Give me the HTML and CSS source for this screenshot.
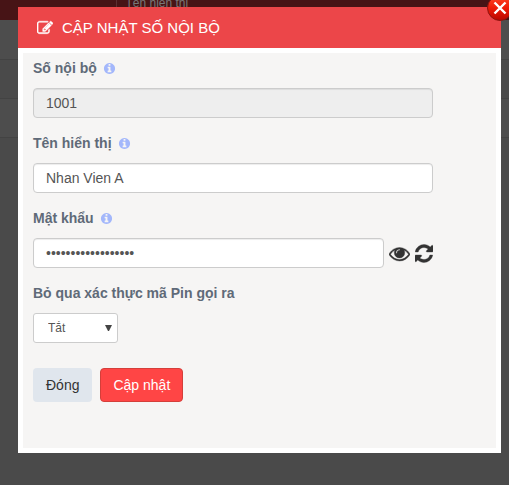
FILE: index.html
```html
<!DOCTYPE html>
<html lang="vi">

<head>
    <meta charset="UTF-8">
    <meta name="viewport" content="width=device-width, initial-scale=1.0">
    <title>Cập nhật số nội bộ</title>
    <link rel="stylesheet" href="styles.css">
</head>

<body>

    <table class="extensions">
        <thead>
            <tr>
                <th class="col-number"></th>
                <th>Tên hiển thị</th>
            </tr>
        </thead>
        <tbody>
            <tr><td></td><td></td></tr>
            <tr><td></td><td></td></tr>
            <tr><td></td><td></td></tr>
        </tbody>
    </table>

    <div class="overlay">
        <div class="modal" role="dialog" aria-labelledby="modalTitle">
            <button type="button" class="close" aria-label="Đóng">
                <svg viewBox="0 0 26 26">
                    <defs>
                        <linearGradient id="closeFill" x1="0" y1="0" x2="0" y2="1">
                            <stop offset="0" stop-color="#ff4a2a"/>
                            <stop offset="0.5" stop-color="#ee1c08"/>
                            <stop offset="1" stop-color="#b80800"/>
                        </linearGradient>
                    </defs>
                    <circle cx="13" cy="13" r="12.500" fill="url(#closeFill)" stroke="#8c1410"/>
                    <path d="M7.500 7.500l11 11M18.500 7.500l-11 11" stroke="#fff" stroke-width="2.400"/>
                </svg>
            </button>

            <h4 class="modal-header" id="modalTitle">
                <svg class="icon-edit" viewBox="0 0 1792 1792"><path d="M888 1184l116-116-152-152-116 116v56h96v96h56zm440-720q-16-16-33 1l-350 350q-17 17-1 33t33-1l350-350q17-17 1-33zm80 594v190q0 119-84.500 203.500t-203.500 84.500h-832q-119 0-203.500-84.500t-84.500-203.500v-832q0-119 84.500-203.500t203.500-84.500h832q63 0 117 25 15 7 18 23 3 17-9 29l-49 49q-14 14-32 8-23-6-45-6h-832q-66 0-113 47t-47 113v832q0 66 47 113t113 47h832q66 0 113-47t47-113v-126q0-13 9-22l64-64q15-15 35-7t20 29zm-96-738l288 288-672 672h-288v-288zm444 132l-92 92-288-288 92-92q28-28 68-28t68 28l152 152q28 28 28 68t-28 68z"/></svg>
                CẬP NHẬT SỐ NỘI BỘ
            </h4>

            <form class="modal-body">
                <svg class="sprite" aria-hidden="true">
                    <symbol id="info" viewBox="0 0 1792 1792"><path d="M1152 1376v-160q0-14-9-23t-23-9h-96v-512q0-14-9-23t-23-9h-320q-14 0-23 9t-9 23v160q0 14 9 23t23 9h96v320h-96q-14 0-23 9t-9 23v160q0 14 9 23t23 9h448q14 0 23-9t9-23zm-128-896v-160q0-14-9-23t-23-9h-192q-14 0-23 9t-9 23v160q0 14 9 23t23 9h192q14 0 23-9t9-23zm640 416q0 209-103 385.500t-279.500 279.500-385.500 103-385.500-103-279.500-279.500-103-385.500 103-385.500 279.500-279.500 385.500-103 385.500 103 279.500 279.500 103 385.500z"/></symbol>
                </svg>

                <div class="form-group">
                    <label for="extension">Số nội bộ <svg class="icon-info"><use href="#info"/></svg></label>
                    <input type="text" id="extension" class="form-control" value="1001" readonly>
                </div>

                <div class="form-group">
                    <label for="displayName">Tên hiển thị <svg class="icon-info"><use href="#info"/></svg></label>
                    <input type="text" id="displayName" class="form-control" value="Nhan Vien A">
                </div>

                <div class="form-group">
                    <label for="password">Mật khẩu <svg class="icon-info"><use href="#info"/></svg></label>
                    <div class="password-row">
                        <input type="password" id="password" class="form-control" value="matkhau10011001abc">
                        <button type="button" class="btn-icon" id="togglePassword" aria-label="Hiện mật khẩu">
                            <svg class="icon-eye" viewBox="0 0 1792 1792"><path d="M1664 960q-152-236-381-353 61 104 61 225 0 185-131.500 316.500t-316.500 131.500-316.500-131.500-131.500-316.500q0-121 61-225-229 117-381 353 133 205 333.500 326.500t434.500 121.500 434.500-121.500 333.500-326.500zm-720-384q0-20-14-34t-34-14q-125 0-214.500 89.500t-89.500 214.500q0 20 14 34t34 14 34-14 14-34q0-86 61-147t147-61q20 0 34-14t14-34zm848 384q0 34-20 69-140 230-376.500 368.500t-499.500 138.500-499.500-139-376.500-368q-20-35-20-69t20-69q140-229 376.500-368t499.500-139 499.500 139 376.500 368q20 35 20 69z"/></svg>
                        </button>
                        <button type="button" class="btn-icon" aria-label="Tạo mật khẩu mới">
                            <svg class="icon-refresh" viewBox="128 0 1536 1792"><path d="M1639 1056q0 5-1 7-64 268-268 434.500t-478 166.500q-146 0-282.500-55t-243.500-157l-129 129q-19 19-45 19t-45-19-19-45v-448q0-26 19-45t45-19h448q26 0 45 19t19 45-19 45l-137 137q71 66 161 102t187 36q134 0 250-65t186-179q11-17 53-117 8-23 30-23h192q13 0 22.500 9.500t9.500 22.500zm25-800v448q0 26-19 45t-45 19h-448q-26 0-45-19t-19-45 19-45l138-138q-148-137-349-137-134 0-250 65t-186 179q-11 17-53 117-8 23-30 23h-199q-13 0-22.500-9.500t-9.500-22.500v-7q65-268 270-434.500t480-166.500q146 0 284 55.500t245 156.500l130-129q19-19 45-19t45 19 19 45z"/></svg>
                        </button>
                    </div>
                </div>

                <div class="form-group">
                    <label for="bypassPin">Bỏ qua xác thực mã Pin gọi ra</label>
                    <div class="select-wrap">
                        <select id="bypassPin">
                            <option selected>Tắt</option>
                            <option>Bật</option>
                        </select>
                        <svg class="select-arrow" viewBox="0 0 7 7"><path d="M0 0h7l-3 6h-1z"/></svg>
                    </div>
                </div>

                <div class="actions">
                    <button type="button" class="btn btn-default">Đóng</button>
                    <button type="submit" class="btn btn-danger">Cập nhật</button>
                </div>
            </form>
        </div>
    </div>

    <script>
        let password = document.getElementById('password');

        document.getElementById('togglePassword').addEventListener('click', function () {
            password.type = password.type === 'password' ? 'text' : 'password';
        });
    </script>

</body>

</html>
```

FILE: styles.css
```css
* {
    box-sizing: border-box;
}

body {
    margin: 0;
    min-height: 100vh;
    background-color: #4a4a4a;
    color: #333;
    font-family: "Liberation Sans", Arial, sans-serif;
    font-size: 14px;
    line-height: 20px;
}

/* Extension list behind the dialog */
.extensions {
    width: 100%;
    border-collapse: collapse;
    table-layout: fixed;
}

.extensions th {
    height: 20px;
    padding: 0 9px 14px;
    background-color: #471416;
    border-left: 1px solid #5d3032;
    color: #777;
    font-size: 12px;
    font-weight: normal;
    line-height: 6px;
    text-align: left;
}

.extensions .col-number {
    width: 116px;
    border-left: none;
}

.extensions td {
    height: 39px;
    padding: 0;
    border-bottom: 1px solid #434343;
}

.extensions tr:nth-child(odd) td {
    background-color: #4d4d4d;
}

/* Dialog */
.overlay {
    position: fixed;
    inset: 0;
    padding: 7px 8px 32px 18px;
}

.modal {
    position: relative;
    display: flex;
    flex-direction: column;
    min-height: 100%;
    background-color: #fff;
}

.modal-header {
    display: flex;
    align-items: center;
    gap: 9px;
    margin: 0;
    padding: 11px 19px 10px;
    background-color: #ec4649;
    color: #fff;
    font-size: 15px;
    font-weight: normal;
    line-height: 20px;
}

.modal-body {
    flex: 1;
    margin: 5px;
    padding: 5px 10px;
    background-color: #f6f5f4;
}

.close {
    position: absolute;
    top: -12px;
    right: -12px;
    width: 26px;
    height: 26px;
    padding: 0;
    border: none;
    background: none;
    cursor: pointer;
}

.close svg {
    display: block;
}

/* Form */
.form-group {
    max-width: 400px;
    margin-bottom: 15px;
}

label {
    display: flex;
    align-items: center;
    gap: 6px;
    margin-bottom: 10px;
    color: #5f6a78;
    font-weight: bold;
}

.form-control {
    display: block;
    width: 100%;
    height: 30px;
    padding: 0 12px;
    border: 1px solid #ccc;
    border-radius: 4px;
    background-color: #fff;
    box-shadow: inset 0 1px 1px rgba(0, 0, 0, 0.075);
    color: #555;
    font: inherit;
}

.form-control[readonly] {
    background-color: #eee;
}

.password-row {
    display: flex;
    align-items: center;
    gap: 5px;
}

.password-row .form-control {
    flex: 1;
}

.select-wrap {
    position: relative;
    width: 85px;
}

select {
    display: block;
    width: 100%;
    height: 30px;
    padding: 0 14px;
    border: 1px solid #ccc;
    border-radius: 3px;
    background-color: #fff;
    color: #555;
    font-family: inherit;
    font-size: 12px;
    appearance: none;
}

.select-arrow {
    position: absolute;
    top: 12px;
    right: 6px;
    width: 7px;
    height: 7px;
    fill: #444;
    pointer-events: none;
}

/* Buttons */
.actions {
    display: flex;
    gap: 8px;
    padding-top: 10px;
}

.btn {
    padding: 6px 12px;
    border: 1px solid transparent;
    border-radius: 4px;
    font: inherit;
    cursor: pointer;
}

.btn-default {
    background-color: #e0e6ed;
    color: #333;
}

.btn-danger {
    background-color: #ff4545;
    border-color: #d43f3a;
    color: #fff;
}

.btn-icon {
    padding: 0;
    border: none;
    background: none;
    color: #333;
    cursor: pointer;
}

.btn-icon svg {
    display: block;
}

/* Icons */
.sprite {
    position: absolute;
    width: 0;
    height: 0;
}

.icon-edit {
    width: 16px;
    height: 16px;
    fill: #fff;
    stroke: #fff;
    stroke-width: 50;
}

.icon-info {
    width: 13px;
    height: 13px;
    fill: #a3b7fb;
}

.icon-eye,
.icon-refresh {
    width: 21px;
    height: 21px;
    fill: #333;
    stroke: #333;
    stroke-width: 30;
}

.icon-refresh {
    width: 18px;
}
```
